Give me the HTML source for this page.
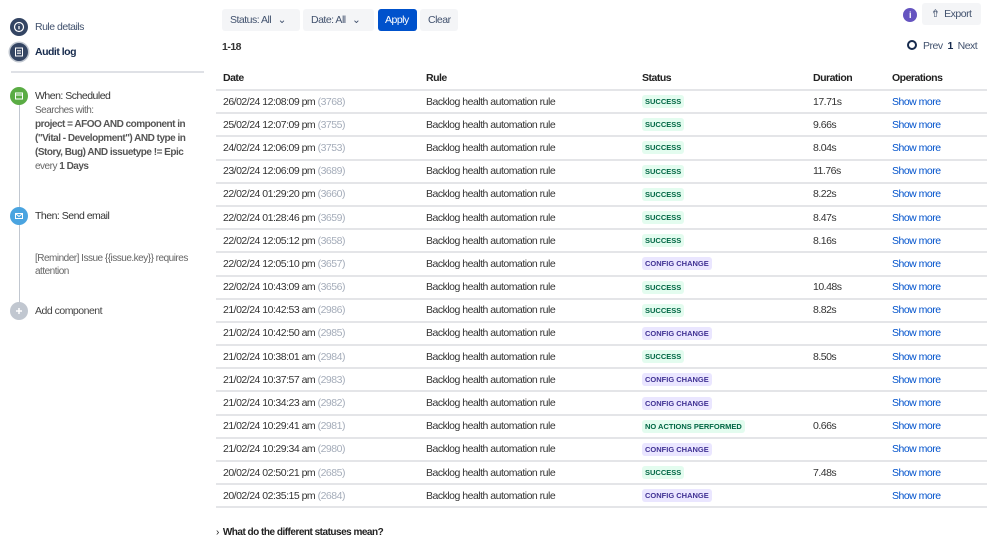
<!DOCTYPE html>
<html><head><meta charset="utf-8"><style>
*{box-sizing:border-box;margin:0;padding:0}
body{width:999px;height:554px;background:#fff;font-family:"Liberation Sans",sans-serif;font-size:10.5px;letter-spacing:-0.5px;color:#333;position:relative;overflow:hidden}
.abs{position:absolute}
.ic{position:absolute;width:18px;height:18px;border-radius:50%;display:flex;align-items:center;justify-content:center}
.side{font-size:10.5px;color:#42526e}
.btn{position:absolute;top:9px;height:22px;border-radius:3px;background:#f4f5f7;color:#42526e;font-size:10.5px;line-height:22px;padding-left:8px}
table{position:absolute;left:216px;top:66px;width:771px;border-collapse:collapse}
th{font-weight:bold;text-align:left;height:24px;border-bottom:2px solid #e4e5e8;font-size:10.5px;padding:0 0 0 7px;color:#222}
td{height:23.2px;border-bottom:2px solid #e4e5e8;padding:0 0 0 7px;font-size:10.5px;color:#333}
.g{color:#a5adba}
.l{color:#0052cc}
.b{display:inline-block;font-size:7.5px;font-weight:bold;padding:2px 3px;border-radius:3px;letter-spacing:0}
.s{background:#e3fcef;color:#006644}
.c{background:#eae6ff;color:#403294}
</style></head><body>
<div class="ic" style="left:10px;top:18px;background:#344563"><svg width="12" height="12" viewBox="0 0 12 12"><circle cx="6" cy="6" r="4.5" fill="none" stroke="#fff" stroke-width="1.2"/><path d="M6 5v3.2M6 3.4v.4" stroke="#fff" stroke-width="1.3"/></svg></div>
<div class="abs side" style="left:35px;top:21px">Rule details</div>
<div class="ic" style="left:10px;top:43px;background:#344563;box-shadow:0 0 0 1.5px #c1c7d0"><svg width="10" height="10" viewBox="0 0 10 10"><rect x="1.5" y="1" width="7" height="8" fill="none" stroke="#fff" stroke-width="1"/><path d="M3 3.5h4M3 5h4M3 6.5h4" stroke="#fff" stroke-width=".8"/></svg></div>
<div class="abs" style="left:35px;top:46px;font-weight:bold;font-size:10.5px;color:#172b4d">Audit log</div>
<div class="abs" style="left:11px;top:71px;width:193px;height:2px;background:#dfe1e6"></div>
<div class="abs" style="left:19px;top:100px;width:1px;height:212px;background:#c1c7d0"></div>
<div class="ic" style="left:10px;top:87px;background:#5aac44"><svg width="10" height="10" viewBox="0 0 10 10"><rect x="1.5" y="2" width="7" height="6" fill="none" stroke="#fff" stroke-width="1"/><path d="M1.5 4h7" stroke="#fff"/></svg></div>
<div class="abs side" style="left:35px;top:90px;color:#333">When: Scheduled</div>
<div class="abs side" style="left:35px;top:104px;font-size:10px;line-height:14px;width:160px;color:#666">Searches with:<br><b style="color:#555">project = AFOO AND component in ("Vital - Development") AND type in (Story, Bug) AND issuetype != Epic</b><br>every <b style="color:#555">1 Days</b></div>
<div class="ic" style="left:10px;top:207px;background:#4aa4e0"><svg width="10" height="10" viewBox="0 0 10 10"><rect x="1.5" y="2.5" width="7" height="5" fill="none" stroke="#fff" stroke-width="1"/><path d="M1.5 2.5l3.5 3 3.5-3" fill="none" stroke="#fff" stroke-width=".9"/></svg></div>
<div class="abs side" style="left:35px;top:210px;color:#333">Then: Send email</div>
<div class="abs side" style="left:35px;top:252px;font-size:10px;line-height:13px;width:170px;color:#666">[Reminder] Issue {{issue.key}} requires attention</div>
<div class="ic" style="left:10px;top:302px;background:#c1c7d0"><svg width="10" height="10" viewBox="0 0 10 10"><path d="M5 2v6M2 5h6" stroke="#fff" stroke-width="1.5"/></svg></div>
<div class="abs side" style="left:35px;top:305px;color:#444">Add component</div>

<div class="btn" style="left:222px;width:78px">Status: All <span style="margin-left:4px">⌄</span></div>
<div class="btn" style="left:303px;width:71px">Date: All <span style="margin-left:4px">⌄</span></div>
<div class="btn" style="left:378px;width:39px;background:#0052cc;color:#fff;padding-left:7px">Apply</div>
<div class="btn" style="left:420px;width:38px">Clear</div>
<div class="abs" style="left:222px;top:41px;font-weight:bold">1-18</div>

<div class="abs" style="left:903px;top:8px;width:14px;height:14px;border-radius:50%;background:#6554c0;color:#fff;font-size:9px;font-weight:bold;text-align:center;line-height:14px">i</div>
<div class="btn" style="left:922px;top:3px;width:59px;padding-left:9px">⇮ &nbsp;Export</div>
<div class="abs" style="left:907px;top:40px;color:#42526e"><span style="display:inline-block;width:10px;height:10px;border:2px solid #172b4d;border-radius:50%;vertical-align:-1px;margin-right:6px"></span>Prev &nbsp;<b style="color:#172b4d">1</b> &nbsp;Next</div>

<table>
<tr><th style="width:203px">Date</th><th style="width:216px">Rule</th><th style="width:171px">Status</th><th style="width:79px">Duration</th><th>Operations</th></tr>
<tr><td>26/02/24 12:08:09 pm <span class="g">(3768)</span></td><td>Backlog health automation rule</td><td><span class="b s">SUCCESS</span></td><td>17.71s</td><td class="l">Show more</td></tr>
<tr><td>25/02/24 12:07:09 pm <span class="g">(3755)</span></td><td>Backlog health automation rule</td><td><span class="b s">SUCCESS</span></td><td>9.66s</td><td class="l">Show more</td></tr>
<tr><td>24/02/24 12:06:09 pm <span class="g">(3753)</span></td><td>Backlog health automation rule</td><td><span class="b s">SUCCESS</span></td><td>8.04s</td><td class="l">Show more</td></tr>
<tr><td>23/02/24 12:06:09 pm <span class="g">(3689)</span></td><td>Backlog health automation rule</td><td><span class="b s">SUCCESS</span></td><td>11.76s</td><td class="l">Show more</td></tr>
<tr><td>22/02/24 01:29:20 pm <span class="g">(3660)</span></td><td>Backlog health automation rule</td><td><span class="b s">SUCCESS</span></td><td>8.22s</td><td class="l">Show more</td></tr>
<tr><td>22/02/24 01:28:46 pm <span class="g">(3659)</span></td><td>Backlog health automation rule</td><td><span class="b s">SUCCESS</span></td><td>8.47s</td><td class="l">Show more</td></tr>
<tr><td>22/02/24 12:05:12 pm <span class="g">(3658)</span></td><td>Backlog health automation rule</td><td><span class="b s">SUCCESS</span></td><td>8.16s</td><td class="l">Show more</td></tr>
<tr><td>22/02/24 12:05:10 pm <span class="g">(3657)</span></td><td>Backlog health automation rule</td><td><span class="b c">CONFIG CHANGE</span></td><td></td><td class="l">Show more</td></tr>
<tr><td>22/02/24 10:43:09 am <span class="g">(3656)</span></td><td>Backlog health automation rule</td><td><span class="b s">SUCCESS</span></td><td>10.48s</td><td class="l">Show more</td></tr>
<tr><td>21/02/24 10:42:53 am <span class="g">(2986)</span></td><td>Backlog health automation rule</td><td><span class="b s">SUCCESS</span></td><td>8.82s</td><td class="l">Show more</td></tr>
<tr><td>21/02/24 10:42:50 am <span class="g">(2985)</span></td><td>Backlog health automation rule</td><td><span class="b c">CONFIG CHANGE</span></td><td></td><td class="l">Show more</td></tr>
<tr><td>21/02/24 10:38:01 am <span class="g">(2984)</span></td><td>Backlog health automation rule</td><td><span class="b s">SUCCESS</span></td><td>8.50s</td><td class="l">Show more</td></tr>
<tr><td>21/02/24 10:37:57 am <span class="g">(2983)</span></td><td>Backlog health automation rule</td><td><span class="b c">CONFIG CHANGE</span></td><td></td><td class="l">Show more</td></tr>
<tr><td>21/02/24 10:34:23 am <span class="g">(2982)</span></td><td>Backlog health automation rule</td><td><span class="b c">CONFIG CHANGE</span></td><td></td><td class="l">Show more</td></tr>
<tr><td>21/02/24 10:29:41 am <span class="g">(2981)</span></td><td>Backlog health automation rule</td><td><span class="b s">NO ACTIONS PERFORMED</span></td><td>0.66s</td><td class="l">Show more</td></tr>
<tr><td>21/02/24 10:29:34 am <span class="g">(2980)</span></td><td>Backlog health automation rule</td><td><span class="b c">CONFIG CHANGE</span></td><td></td><td class="l">Show more</td></tr>
<tr><td>20/02/24 02:50:21 pm <span class="g">(2685)</span></td><td>Backlog health automation rule</td><td><span class="b s">SUCCESS</span></td><td>7.48s</td><td class="l">Show more</td></tr>
<tr><td>20/02/24 02:35:15 pm <span class="g">(2684)</span></td><td>Backlog health automation rule</td><td><span class="b c">CONFIG CHANGE</span></td><td></td><td class="l">Show more</td></tr>
</table>
<div class="abs" style="left:216px;top:527px;font-weight:bold;font-size:10px;color:#222"><span style="font-weight:normal;margin-right:4px">›</span>What do the different statuses mean?</div>
</body></html>
